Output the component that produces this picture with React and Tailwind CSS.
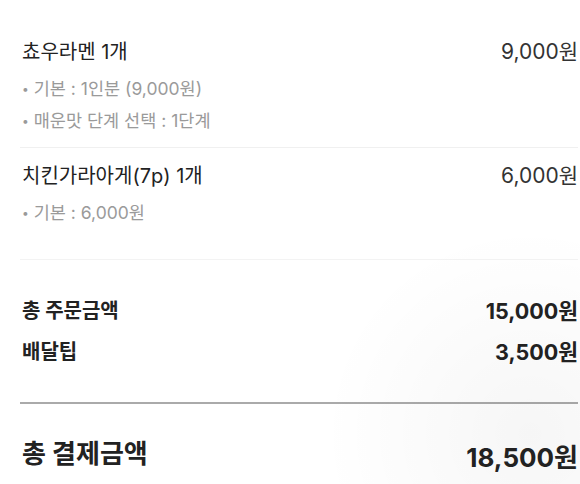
const items = [
  {
    name: '쵸우라멘 1개',
    price: '9,000원',
    options: ['기본 : 1인분 (9,000원)', '매운맛 단계 선택 : 1단계'],
  },
  {
    name: '치킨가라아게(7p) 1개',
    price: '6,000원',
    options: ['기본 : 6,000원'],
  },
];

function OrderItem({ item, className }) {
  return (
    <div className={className}>
      <div className="flex items-center justify-between pl-[2px] text-[20px] leading-[28px] text-[#222]">
        <span>{item.name}</span>
        <span className="text-[21px] text-[#333]">{item.price}</span>
      </div>
      <ul className="mt-[7px] pl-[2px]">
        {item.options.map((option) => (
          <li key={option} className="flex items-center text-[17.5px] leading-[32px] text-[#9a9a9a]">
            <span className="mr-[5px] text-[12px]">•</span>
            {option}
          </li>
        ))}
      </ul>
    </div>
  );
}

export default function App() {
  return (
    <div
      className="relative h-[484px] w-[580px] overflow-hidden bg-white pl-[20px] pr-[2px]"
      style={{ fontFamily: 'Inter, "Noto Sans CJK KR", sans-serif' }}
    >
      <div className="pointer-events-none absolute -bottom-40 -right-40 h-[420px] w-[420px] rounded-full bg-[radial-gradient(circle,rgba(0,0,0,0.035),transparent_70%)]" />

      <OrderItem item={items[0]} className="border-b border-[#f0f0f0] pt-[38px] pb-[10px]" />
      <OrderItem item={items[1]} className="border-b border-[#f3f3f3] pt-[14px] pb-[30px]" />

      <div className="border-b-2 border-[#aaaaaa] pt-[37px] pb-[36px] pl-[2px]">
        <div className="flex items-center justify-between text-[20px] font-bold leading-[28px] text-[#222]">
          <span>총 주문금액</span>
          <span className="text-[21.5px]">15,000원</span>
        </div>
        <div className="mt-[13px] flex items-center justify-between text-[20px] font-bold leading-[28px] text-[#222]">
          <span>배달팁</span>
          <span className="text-[21.5px]">3,500원</span>
        </div>
      </div>

      <div className="relative flex items-end justify-between pt-[32px] pl-[2px] font-bold text-[#222]">
        <span className="text-[26px] leading-[36px]">총 결제금액</span>
        <span className="text-[26px] leading-[36px] translate-y-[4px]">18,500원</span>
      </div>
    </div>
  );
}
